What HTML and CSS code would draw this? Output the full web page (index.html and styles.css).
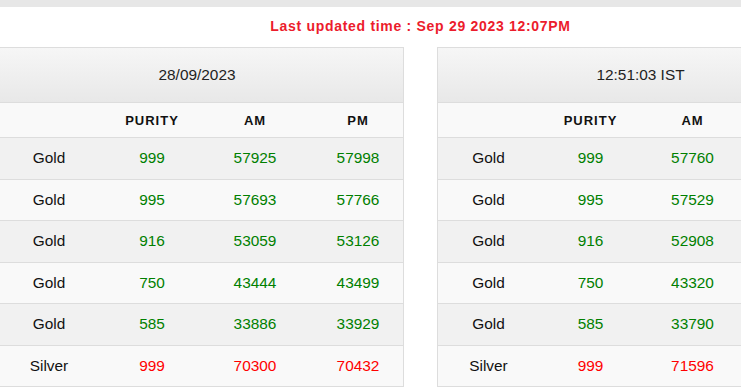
FILE: index.html
```html
<!DOCTYPE html>
<html>
<head>
<meta charset="utf-8">
<link rel="stylesheet" href="styles.css">
</head>
<body>
<div class="topbar"></div>
<div class="updated">Last updated time : Sep 29 2023 12:07PM</div>
<div class="panels">
  <div class="rates rates-left">
    <div class="head">28/09/2023</div>
    <div class="row sub"><span></span><span>PURITY</span><span>AM</span><span>PM</span></div>
    <div class="row odd"><span class="name">Gold</span><span class="g">999</span><span class="g">57925</span><span class="g">57998</span></div>
    <div class="row even"><span class="name">Gold</span><span class="g">995</span><span class="g">57693</span><span class="g">57766</span></div>
    <div class="row odd"><span class="name">Gold</span><span class="g">916</span><span class="g">53059</span><span class="g">53126</span></div>
    <div class="row even"><span class="name">Gold</span><span class="g">750</span><span class="g">43444</span><span class="g">43499</span></div>
    <div class="row odd"><span class="name">Gold</span><span class="g">585</span><span class="g">33886</span><span class="g">33929</span></div>
    <div class="row even"><span class="name">Silver</span><span class="r">999</span><span class="r">70300</span><span class="r">70432</span></div>
  </div>
  <div class="rates rates-right">
    <div class="head">12:51:03 IST</div>
    <div class="row sub"><span></span><span>PURITY</span><span>AM</span><span></span></div>
    <div class="row odd"><span class="name">Gold</span><span class="g">999</span><span class="g">57760</span><span></span></div>
    <div class="row even"><span class="name">Gold</span><span class="g">995</span><span class="g">57529</span><span></span></div>
    <div class="row odd"><span class="name">Gold</span><span class="g">916</span><span class="g">52908</span><span></span></div>
    <div class="row even"><span class="name">Gold</span><span class="g">750</span><span class="g">43320</span><span></span></div>
    <div class="row odd"><span class="name">Gold</span><span class="g">585</span><span class="g">33790</span><span></span></div>
    <div class="row even"><span class="name">Silver</span><span class="r">999</span><span class="r">71596</span><span></span></div>
  </div>
</div>
</body>
</html>
```
FILE: styles.css
```css
html, body {
  margin: 0;
  padding: 0;
  background: #fff;
  overflow: hidden;
}
body {
  font-family: "Liberation Sans", Arial, sans-serif;
  color: #111;
}
.topbar {
  height: 7px;
  background: #e7e7e7;
}
.updated {
  height: 40px;
  line-height: 38px;
  text-align: center;
  font-size: 14px;
  font-weight: bold;
  letter-spacing: 0.7px;
  color: #ec1c2c;
  padding-left: 100px;
}
.panels {
  display: flex;
  gap: 33px;
  margin-left: -10px;
}
.rates {
  flex: none;
  border: 1px solid #dddddd;
  border-bottom: none;
}
.rates-left {
  width: 412px;
}
.rates-right {
  width: 405px;
}
.head {
  height: 54px;
  line-height: 54px;
  text-align: center;
  font-size: 15.4px;
  color: #222;
  background: linear-gradient(#f6f6f6, #e8e8e8);
  border-bottom: 1px solid #dddddd;
}
.row {
  display: grid;
  align-items: center;
  text-align: center;
  border-bottom: 1px solid #dddddd;
  box-sizing: border-box;
  height: 41.5px;
  font-size: 15.4px;
}
.rates-left .row {
  grid-template-columns: 116px 90px 116px 90px;
}
.rates-right .row {
  grid-template-columns: 101px 103px 101px 100px;
}
.row.sub {
  height: 35px;
  background: #f9f9f9;
  font-size: 13px;
  font-weight: bold;
  letter-spacing: 1px;
  color: #111;
}
.row.odd {
  background: #f1f1f1;
}
.row.even {
  background: #f9f9f9;
}
.name {
  color: #111;
}
.g {
  color: #008000;
}
.r {
  color: #ff0000;
}
```
